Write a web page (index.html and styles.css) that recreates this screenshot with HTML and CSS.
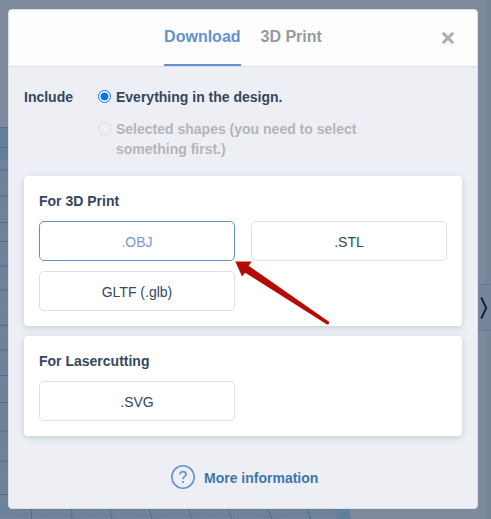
FILE: index.html
```html
<!DOCTYPE html>
<html lang="en">
<head>
<meta charset="utf-8">
<title>Download</title>
<link rel="stylesheet" href="styles.css">
</head>
<body>
<svg class="workplane" width="491" height="519" viewBox="0 0 491 519" aria-hidden="true">
  <defs>
    <pattern id="fine" width="3" height="3" patternUnits="userSpaceOnUse">
      <path d="M0 .5H3M.5 0V3" stroke="#5e7b98" stroke-width="1" opacity=".5"/>
    </pattern>
  </defs>
  <path d="M0 127H300L351 519H0Z" fill="#74859b"/>
  <path d="M0 127H300L351 519H0Z" fill="url(#fine)"/>
  <path d="M0 127H8V160H0ZM334 509H348L351 519H338Z" fill="#5d7f9e" opacity=".7"/>
  <path d="M0 127.500H8M0 147.500H8M0 170H8M0 196H8M0 222.500H8M0 241.500H8M0 266H8M0 290H8M0 325.500H8M0 350H8M0 375.500H8M0 402.500H8M0 431H8M0 461H8M0 494.500H8M31.500 509V519M71 509L72 519M110 509L112 519M149 509L152 519M189 509L192 519M228 509L232 519M268 509L272 519M307 509L311 519" fill="none" stroke="#4f6f90" stroke-width="1"/>
</svg>
<button class="drawer" aria-label="Open panel">
  <svg width="8" height="24" viewBox="0 0 8 24"><path d="M1.200 1.500L6.200 12L1.200 22.500" fill="none" stroke="#15233a" stroke-width="2"/></svg>
</button>
<main class="dialog">
  <header class="header">
    <nav class="tabs">
      <a class="tab active">Download</a>
      <a class="tab">3D Print</a>
    </nav>
    <svg class="close" width="12" height="12" viewBox="0 0 12 12"><path d="M1.700 1.700L10.300 10.300M10.300 1.700L1.700 10.300" stroke="#adadad" stroke-width="3" stroke-linecap="round"/></svg>
  </header>
  <section class="include">
    <div class="label">Include</div>
    <div class="options">
      <div class="option"><span class="radio checked"></span><span>Everything in the design.</span></div>
      <div class="option disabled"><span class="radio"></span><span>Selected shapes (you need to select something first.)</span></div>
    </div>
  </section>
  <section class="card">
    <h2>For 3D Print</h2>
    <div class="formats">
      <button class="format selected">.OBJ</button>
      <button class="format">.STL</button>
      <button class="format">GLTF (.glb)</button>
    </div>
  </section>
  <section class="card">
    <h2>For Lasercutting</h2>
    <div class="formats">
      <button class="format">.SVG</button>
    </div>
  </section>
  <footer class="more">
    <svg width="24" height="24" viewBox="0 0 24 24" fill="none" stroke="#6694d0">
      <circle cx="12" cy="12" r="11.200" stroke-width="1.600"/>
      <path d="M8.900 9.500C8.900 7.500 10.200 6.600 12 6.600S15.100 7.700 15.100 9.300C15.100 11.300 12 11.600 12 14.200M12 16V17.900" stroke-width="1.700"/>
    </svg>
    <span>More information</span>
  </footer>
</main>
<svg class="arrow" width="98" height="67" viewBox="0 0 98 67" aria-hidden="true"><path d="M.3 1.500L16.800 1.400L13.600 5.800L94 61.800Q94.500 64.500 92 64.600L10.200 12.700L7 16.500Z" fill="#b40c05"/></svg>
</body>
</html>
```
FILE: styles.css
```css
* { box-sizing: border-box; }
body {
  margin: 0;
  height: 519px;
  padding: 9px 13px 9px 8px;
  overflow: hidden;
  background: linear-gradient(90deg, #7e899b 485px, #78849a 485px);
  font: bold 14px/20px "Liberation Sans", Arial, sans-serif;
  color: #34475e;
}
.workplane { position: absolute; left: 0; top: 0; }
.drawer {
  position: absolute;
  right: 0;
  top: 284px;
  width: 16px;
  height: 47px;
  padding: 0 0 0 5px;
  border: solid #697890;
  border-width: 1px 0;
  background: #78849a;
  display: flex;
  align-items: center;
}
.dialog {
  position: relative;
  height: 500px;
  border: 1px solid #d8dfe6;
  border-radius: 4px;
  background: #edeff4;
  overflow: hidden;
}
.header {
  height: 57px;
  background: #fdfdfd;
  border-bottom: 1px solid #dbe0e5;
  display: flex;
  justify-content: center;
  position: relative;
}
.tabs { display: flex; gap: 20px; }
.tab {
  height: 56px;
  padding-top: 17px;
  font-size: 16px;
  color: #949b9f;
}
.tab.active { color: #6292d0; border-bottom: 2px solid #6292d0; }
.close { position: absolute; right: 23px; top: 22px; }
.include { display: flex; padding: 20px 80px 0 15px; height: 109px; }
.label { width: 74px; }
.options { flex: 1; }
.option { display: flex; gap: 5px; margin-bottom: 12px; }
.radio {
  flex: none;
  width: 13px;
  height: 13px;
  margin-top: 3px;
  border: 1px solid #d9dbde;
  border-radius: 50%;
}
.radio.checked {
  border-color: #0075ff;
  background: radial-gradient(circle, #0075ff 3.7px, #fff 4.3px);
}
.disabled { color: #b4b5b7; }
.card {
  margin: 0 15px 10px;
  padding: 15px;
  background: #fff;
  border-radius: 4px;
  box-shadow: 0 2px 6px rgba(70, 105, 140, .24);
}
h2 { margin: 0 0 10px; font-size: 14px; line-height: 20px; }
.formats { display: grid; grid-template-columns: 196px 196px; gap: 10px 16px; }
.format {
  height: 40px;
  padding: 2px 0 0;
  border: 1px solid #dddfe2;
  border-radius: 5px;
  background: #fff;
  font: 14px/20px "Liberation Sans", Arial, sans-serif;
  color: #34475e;
}
.format.selected { border-color: #6490c5; color: #7d9acb; }
.more {
  display: flex;
  align-items: center;
  gap: 9px;
  margin-top: 29px;
  padding-left: 162px;
  color: #3f76ab;
}
.more span { padding-top: 2px; }
.arrow { position: absolute; left: 235px; top: 260px; }
```
